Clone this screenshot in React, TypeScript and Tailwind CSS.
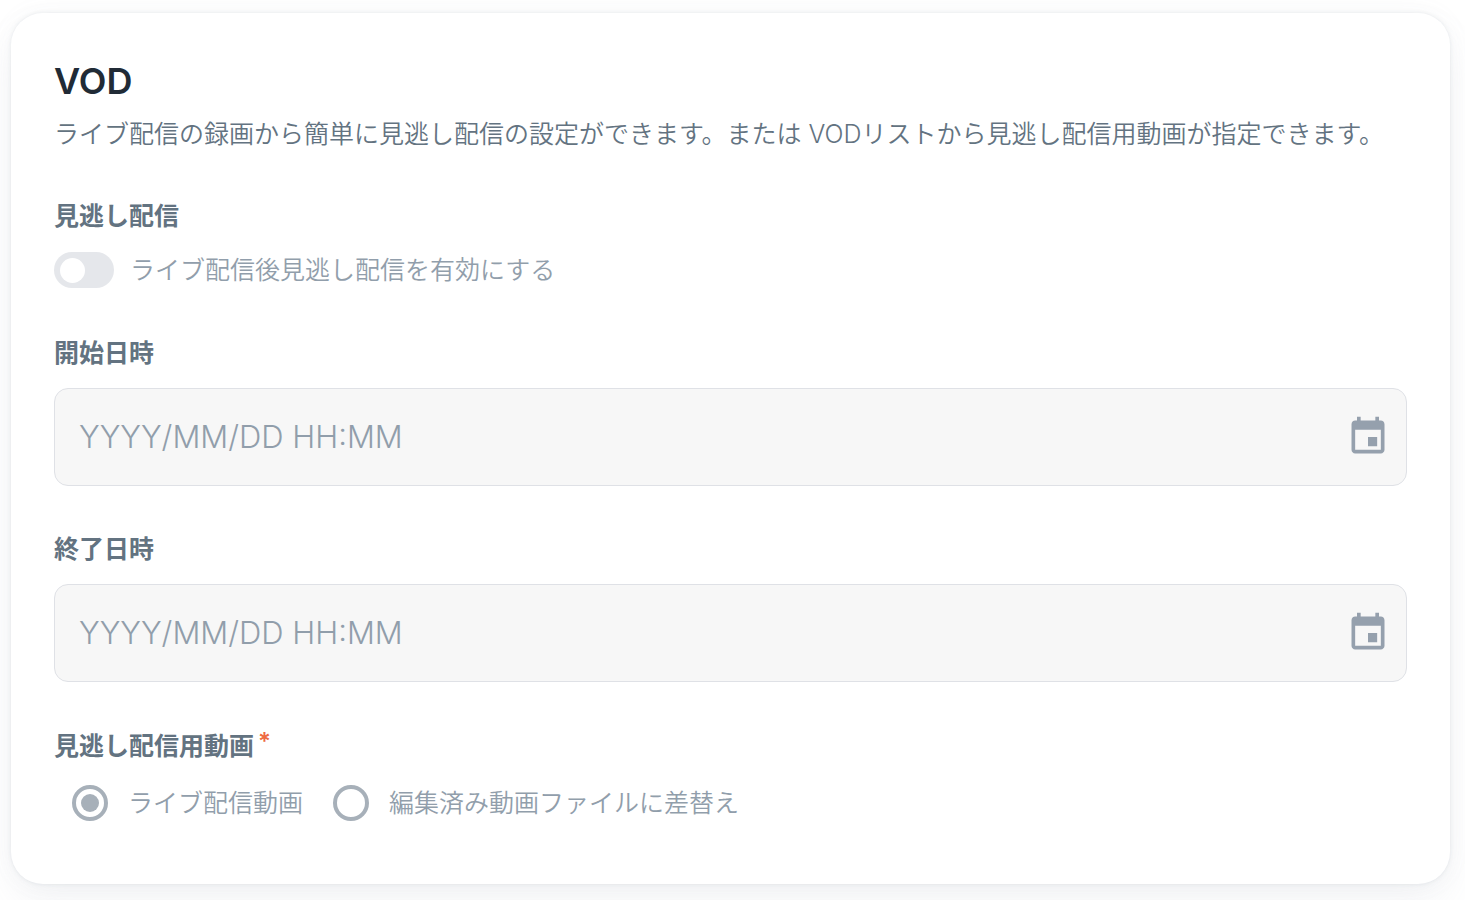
import { useId } from "react";

function CalendarIcon() {
  return (
    <svg viewBox="0 0 24 24" className="h-11 w-11 fill-[#95a0ad]" aria-hidden="true">
      <path d="M17 12h-5v5h5v-5zM16 1v2H8V1H6v2H5c-1.110 0-1.990.9-1.990 2L3 19c0 1.100.890 2 2 2h14c1.100 0 2-.9 2-2V5c0-1.100-.9-2-2-2h-1V1h-2zm3 18H5V8h14v11z" />
    </svg>
  );
}

function DateField({ label }: { label: string }) {
  const id = useId();
  return (
    <div className="flex flex-col gap-[19px]">
      <label htmlFor={id} className="text-[25px] leading-8 font-bold text-[#637381]">
        {label}
      </label>
      <div className="flex h-[98px] items-center rounded-[14px] border border-[#dfe1e6] bg-[#f7f7f7] pr-4 pl-6">
        <input
          id={id}
          type="text"
          disabled
          placeholder="YYYY/MM/DD HH:MM"
          className="min-w-0 flex-1 bg-transparent text-[31px] leading-10 font-light outline-none placeholder:text-[#919eab] placeholder:opacity-100"
        />
        <button type="button" disabled aria-label={label}>
          <CalendarIcon />
        </button>
      </div>
    </div>
  );
}

function RadioOption({ label, checked }: { label: string; checked?: boolean }) {
  return (
    <label className="flex items-center gap-5">
      <input
        type="radio"
        name="vod-source"
        disabled
        defaultChecked={checked}
        className="grid size-9 shrink-0 appearance-none place-content-center rounded-full border-4 border-[#a7b0b9] before:size-[18px] before:rounded-full before:content-[''] checked:before:bg-[#a7b0b9]"
      />
      <span className="text-[25px] leading-9 font-[350] text-[#919eab]">{label}</span>
    </label>
  );
}

export default function App() {
  return (
    <main className="flow-root min-h-screen bg-white pb-4 font-['Inter','Noto_Sans_CJK_JP',sans-serif]">
      <section className="mt-[13px] mr-[15px] ml-[11px] rounded-[32px] bg-white px-[43px] pt-11 pb-[63px] shadow-[0_0_4px_rgba(145,158,171,0.2),0_0_24px_rgba(145,158,171,0.06),0_20px_40px_-4px_rgba(145,158,171,0.12)]">
        <h2 className="text-4xl leading-[48px] font-semibold text-[#212b36]">VOD</h2>
        <p className="mt-[9px] text-[25px] leading-10 font-[350] text-[#637381]">
          ライブ配信の録画から簡単に見逃し配信の設定ができます。または VODリストから見逃し配信用動画が指定できます。
        </p>

        <fieldset className="mt-[46px]">
          <legend className="text-[25px] leading-8 font-bold text-[#637381]">見逃し配信</legend>
          <label className="mt-5 flex items-center gap-4">
            <input
              type="checkbox"
              role="switch"
              disabled
              className="flex h-9 w-[60px] shrink-0 appearance-none items-center rounded-full bg-[#e5e7eb] px-1.5 before:size-[25px] before:rounded-full before:bg-white before:content-['']"
            />
            <span className="text-[25px] leading-9 font-[350] text-[#919eab]">
              ライブ配信後見逃し配信を有効にする
            </span>
          </label>
        </fieldset>

        <div className="mt-[49px] flex flex-col gap-[47px]">
          <DateField label="開始日時" />
          <DateField label="終了日時" />
        </div>

        <fieldset className="mt-12">
          <legend className="flex gap-1 text-[25px] leading-8 font-bold text-[#637381]">
            見逃し配信用動画
            <span className="text-2xl leading-6 font-semibold text-[#ee6a44]">*</span>
          </legend>
          <div className="mt-[23px] flex items-center gap-[30px] pl-[18px]">
            <RadioOption label="ライブ配信動画" checked />
            <RadioOption label="編集済み動画ファイルに差替え" />
          </div>
        </fieldset>
      </section>
    </main>
  );
}
